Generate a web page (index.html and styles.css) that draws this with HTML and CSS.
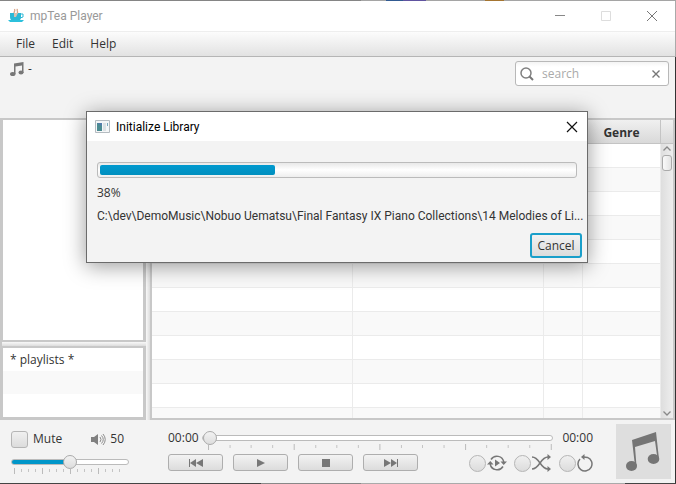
FILE: index.html
```html
<!DOCTYPE html>
<html lang="en">
<head>
<meta charset="utf-8">
<title>mpTea Player</title>
<link rel="stylesheet" href="styles.css">
</head>
<body>
<div class="window">
  <header class="titlebar">
    <svg class="app-icon" width="16" height="16" viewBox="0 0 16 16" aria-hidden="true">
      <path d="M6.500 6C4.500 4.500 8 3.500 6.500 1M9 5.500c2-2-1-2.500.5-4.500" fill="none" stroke="#d9a487" stroke-width="1.300"/>
      <path d="M2 5h11v4q0 4-4 4H6q-4 0-4-4z" fill="#2cb8d6"/>
      <path d="M6 5h4l-2 4H6z" fill="#d8c0b0"/>
      <path d="M12.500 6H15v3l-3 1" fill="none" stroke="#2cb8d6" stroke-width="1"/>
      <path d="M0 12h16l-2 2H2z" fill="#2cc0dc"/>
    </svg>
    <h1>mpTea Player</h1>
    <div class="window-buttons">
      <button type="button" aria-label="Minimize"><svg width="12" height="12"><path d="M1 5.500h10" stroke="#888"/></svg></button>
      <button type="button" aria-label="Maximize" disabled><svg width="12" height="12"><path d="M1.500 1.500h9v9h-9z" fill="none" stroke="#ddd"/></svg></button>
      <button type="button" aria-label="Close"><svg width="12" height="12"><path d="M1 1l10 10M11 1L1 11" stroke="#777"/></svg></button>
    </div>
  </header>

  <nav class="menubar">
    <button type="button">File</button>
    <button type="button">Edit</button>
    <button type="button">Help</button>
  </nav>

  <section class="toolbar">
    <div class="now-playing">
      <svg width="14" height="14" viewBox="0 0 28 28" aria-hidden="true"><use href="#note"/></svg>
      <span>-</span>
    </div>
    <div class="search">
      <svg width="14" height="14" viewBox="0 0 14 14" aria-hidden="true"><circle cx="6" cy="6" r="5" fill="none" stroke="#808080" stroke-width="1.500"/><path d="M9.500 9.500l3.500 3.500" stroke="#777" stroke-width="2"/></svg>
      <input type="text" placeholder="search" aria-label="search">
      <button type="button" aria-label="Clear"><svg width="8" height="8"><path d="M.5.5l7 7M7.500.5l-7 7" stroke="#777" stroke-width="1.400"/></svg></button>
    </div>
  </section>

  <main class="content">
    <aside class="sidebar">
      <div class="library"></div>
      <div class="split-h"></div>
      <ul class="playlists">
        <li>* playlists *</li>
        <li></li>
        <li></li>
      </ul>
    </aside>
    <div class="split-v"></div>
    <section class="tracks">
      <div class="table-clip">
        <table>
          <colgroup><col><col class="col-artist"><col class="col-number"><col class="col-genre"></colgroup>
          <thead><tr><th></th><th></th><th></th><th>Genre</th></tr></thead>
          <tbody>
            <tr><td></td><td></td><td></td><td></td></tr>
            <tr><td></td><td></td><td></td><td></td></tr>
            <tr><td></td><td></td><td></td><td></td></tr>
            <tr><td></td><td></td><td></td><td></td></tr>
            <tr><td></td><td></td><td></td><td></td></tr>
            <tr><td></td><td></td><td></td><td></td></tr>
            <tr><td></td><td></td><td></td><td></td></tr>
            <tr><td></td><td></td><td></td><td></td></tr>
            <tr><td></td><td></td><td></td><td></td></tr>
            <tr><td></td><td></td><td></td><td></td></tr>
            <tr><td></td><td></td><td></td><td></td></tr>
            <tr><td></td><td></td><td></td><td></td></tr>
          </tbody>
        </table>
      </div>
      <div class="scroll-column">
        <div class="corner"></div>
        <div class="scrollbar">
          <svg width="8" height="5"><path d="M.5 4.500L4 1l3.500 3.500" fill="none" stroke="#888" stroke-width="1.300"/></svg>
          <div class="scroll-thumb"></div>
          <svg width="8" height="5"><path d="M.5.5L4 4 7.500.5" fill="none" stroke="#888" stroke-width="1.300"/></svg>
        </div>
      </div>
    </section>
  </main>

  <footer class="player">
    <div class="volume">
      <div class="volume-row">
        <label class="mute"><input type="checkbox">Mute</label>
        <svg width="15" height="13" viewBox="0 0 15 13" aria-hidden="true"><path d="M0 4h3l4-3v11L3 9H0z" fill="#808080"/><path d="M9 4q2 2.500 0 5M10.500 2.500q3.500 4 0 8M12 1q4.500 5.500 0 11" fill="none" stroke="#8c8c8c"/></svg>
        <span>50</span>
      </div>
      <input class="slider half" type="range" min="0" max="100" value="50" aria-label="Volume">
      <svg class="volume-ticks" width="118" height="7" aria-hidden="true">
        <path d="M3.500 0v6M31.500 0v6M59.500 0v6M87.500 0v6" stroke="#bbb"/>
        <path d="M10.500 1v3M17.500 1v3M24.500 1v3M38.500 1v3M45.500 1v3M52.500 1v3M66.500 1v3M73.500 1v3M80.500 1v3M94.500 1v3M101.500 1v3M108.500 1v3" stroke="#c4c4c4"/>
      </svg>
    </div>

    <div class="transport">
      <div class="seek">
        <span>00:00</span>
        <div class="seek-slider">
          <input class="slider" type="range" min="0" max="100" value="0" aria-label="Position">
          <svg class="seek-ticks" width="100%" height="6" viewBox="0 0 351 6" preserveAspectRatio="none" aria-hidden="true">
            <path d="M6.500 0v6M92 0v6M177.500 0v6M263 0v6M348.500 0v6" stroke="#bbb"/>
            <path d="M28 1v3M49 1v3M70.500 1v3M113.500 1v3M134.500 1v3M156 1v3M199 1v3M220 1v3M241.500 1v3M284 1v3M305.500 1v3M327 1v3" stroke="#c4c4c4"/>
          </svg>
        </div>
        <span>00:00</span>
      </div>
      <div class="controls">
        <button type="button" aria-label="Previous"><svg width="14" height="8"><path d="M0 0h1v4l6-4v4l7-4v8L7 4v4L1 4v4H0z" fill="#777"/></svg></button>
        <button type="button" aria-label="Play"><svg width="8" height="8"><path d="M0 0l8 4-8 4z" fill="#777"/></svg></button>
        <button type="button" aria-label="Stop"><svg width="8" height="8"><path d="M0 0h8v8H0z" fill="#777"/></svg></button>
        <button type="button" aria-label="Next"><svg width="14" height="8"><path d="M14 0h-1v4L7 0v4L0 0v8l7-4v4l6-4v4h1z" fill="#777"/></svg></button>
        <div class="modes">
          <label><input type="radio" name="auto" aria-label="Autoplay">
            <svg width="20" height="18" viewBox="0 0 20 18"><path d="M4 5.500A7 7 0 0 1 16.800 8M16 12.500A7 7 0 0 1 3.200 10" fill="none" stroke="#777" stroke-width="1.500"/><path d="M13.500 7.500h6.500l-3.300 3.500zM0 10.500h6.500L3.300 7zM8 5.500l5 3.500-5 3.500z" fill="#777"/></svg></label>
          <label><input type="radio" name="shuffle" aria-label="Shuffle">
            <svg width="20" height="18" viewBox="0 0 20 18"><path d="M0 3c8 0 8 12 16 12M0 15c8 0 8-12 16-12" fill="none" stroke="#777" stroke-width="1.500"/><path d="M15.500 0l3.500 3-3.500 3zM15.500 12l3.500 3-3.500 3z" fill="#777"/></svg></label>
          <label><input type="radio" name="repeat" aria-label="Repeat">
            <svg width="16" height="18" viewBox="0 0 16 18"><path d="M3 5A7 7 0 1 0 10.500 3.400L6.500 3" fill="none" stroke="#777" stroke-width="1.500"/><path d="M7.500 0v6L4 3z" fill="#777"/></svg></label>
        </div>
      </div>
    </div>

    <div class="cover">
      <svg width="36" height="40" viewBox="0 0 36 40" aria-hidden="true">
        <path d="M6 8L30 0l3 27h-1.500L29 9 9 15l1.500 19H9z" fill="#757575"/>
        <ellipse cx="5.500" cy="34" rx="5.500" ry="5" fill="#757575"/>
        <ellipse cx="27.500" cy="27" rx="5.800" ry="5" fill="#757575"/>
      </svg>
    </div>
  </footer>

  <section class="dialog" role="dialog" aria-labelledby="dialog-title">
    <header class="dialog-title">
      <svg width="15" height="13" viewBox="0 0 15 13" aria-hidden="true"><path d="M.5.5h14v12H.5z" fill="#f4f6f7" stroke="#b4bbc0"/><path d="M2 3h5v8H2z" fill="#4b8b91"/><path d="M2 3h5v3z" fill="#547cab"/><path d="M8 3h3v8H8z" fill="#dce1e4"/><path d="M12 3h1v3h-1z" fill="#79a9bc"/></svg>
      <h2 id="dialog-title">Initialize Library</h2>
      <button type="button" aria-label="Close"><svg width="12" height="12"><path d="M1 1l10 10M11 1L1 11" stroke="#111" stroke-width="1.200"/></svg></button>
    </header>
    <div class="dialog-body">
      <div class="progress" role="progressbar" aria-valuenow="38" aria-label="Scan progress"><div class="progress-fill"></div></div>
      <p>38%</p>
      <p class="path">C:\dev\DemoMusic\Nobuo Uematsu\Final Fantasy IX Piano Collections\14 Melodies of Li...</p>
      <button class="cancel" type="button">Cancel</button>
    </div>
  </section>
</div>

<svg width="0" height="0" class="symbols" aria-hidden="true">
  <symbol id="note" viewBox="0 0 28 28"><path d="M8 3L27 0v22h-3V7L11 9v15H8z" fill="#777"/><ellipse cx="5.500" cy="24" rx="5.500" ry="4" fill="#777"/><ellipse cx="22" cy="21" rx="5" ry="4" fill="#777"/></symbol>
</svg>
</body>
</html>
```
FILE: styles.css
```css
* { box-sizing: border-box; }

body {
  margin: 0;
  font: 12px/16px "Open Sans", "Noto Sans", sans-serif;
  color: #333;
}

h1, h2, p, ul { margin: 0; padding: 0; font-size: 12px; font-weight: 400; list-style: none; }
h1, h2, .path { font-family: Roboto, sans-serif; }
button, input { font: inherit; color: inherit; margin: 0; }
button { padding: 0; border: 0; background: none; }
svg { display: block; flex: none; }
.symbols { position: absolute; }

.window {
  position: relative;
  display: flex;
  flex-direction: column;
  height: 100vh;
  padding: 1px 1px 1px 0;
  background:
    linear-gradient(90deg, #858585 361px, #a5a5a5 361px 386px, #315a91 386px 403px, #6054a0 403px 426px, #a5a5a5 426px 485px, #a57531 485px 504px, #a5a5a5 504px) top / 100% 1px no-repeat,
    linear-gradient(90deg, #444 261px, #888 261px 361px, #aaa 361px 625px, #444 625px) bottom / 100% 1px no-repeat,
    linear-gradient(#aaa 57px, #333 57px) right / 1px 100% no-repeat,
    #f3f3f3;
}

.titlebar {
  display: flex;
  align-items: center;
  height: 31px;
  padding-left: 8px;
  background: #fff;
  border-bottom: 1px solid #eee;
  color: #999;
}
.titlebar h1 { margin-left: 6px; }
.window-buttons { display: flex; margin-left: auto; }
.window-buttons button { display: grid; place-items: center; width: 46px; height: 28px; }

.menubar {
  display: flex;
  gap: 17px;
  height: 25px;
  padding-left: 16px;
  background: linear-gradient(#fcfcfc, #e2e2e2);
  border-bottom: 1px solid #b5b5b5;
}

.toolbar {
  display: flex;
  justify-content: space-between;
  align-items: flex-start;
  height: 61px;
  padding: 4px 6px 0 10px;
}
.now-playing { display: flex; align-items: center; gap: 4px; }
.search {
  display: flex;
  align-items: center;
  gap: 8px;
  width: 154px;
  height: 25px;
  padding: 0 8px 0 4px;
  border: 1px solid #b8b8b8;
  border-radius: 3px;
  background: linear-gradient(#f4f4f4, #fff 5px);
}
.search input { flex: 1; min-width: 0; padding: 0; border: 0; background: none; outline: 0; }
.search input::placeholder { color: #aaa; }

.content { display: flex; flex: 1; min-height: 0; }
.sidebar { display: flex; flex-direction: column; width: 146px; border-left: 2px solid #c8c8c8; }
.library { flex: 1; border: solid #c8c8c8; border-width: 2px 3px 2px 1px; background: #fff; }
.split-h { height: 4px; background: linear-gradient(#f8f8f8, #ddd); }
.playlists { border: solid #c8c8c8; border-width: 2px 3px 3px 1px; background: #fff; }
.playlists li { height: 23px; padding: 4px 7px 0; }
.playlists li:nth-child(even) { background: #f9f9f9; }
.split-v { width: 4px; background: linear-gradient(90deg, #f8f8f8, #ddd); }

.tracks { display: flex; flex: 1; min-width: 0; border: 2px solid #c8c8c8; }
.table-clip { flex: 1; overflow: hidden; background: #fff; }
table { width: 100%; table-layout: fixed; border-collapse: separate; border-spacing: 0; }
.col-artist { width: 191px; }
.col-number { width: 39px; }
.col-genre { width: 78px; }
th, td { height: 24px; padding: 0; border: solid #ebebeb; border-width: 0 1px 1px 0; }
th { padding-top: 2px; border-color: #c4c4c4; background: linear-gradient(#f0f0f0, #d9d9d9); }
tbody tr:nth-child(even) { background: #f9f9f9; }

.scroll-column { display: flex; flex-direction: column; width: 12px; }
.corner { height: 24px; border-bottom: 1px solid #c4c4c4; background: linear-gradient(#f0f0f0, #d9d9d9); }
.scrollbar {
  display: flex;
  flex: 1;
  flex-direction: column;
  align-items: center;
  gap: 4px;
  padding: 2px 0;
  background: linear-gradient(90deg, #dedede, #eee);
}
.scroll-thumb {
  width: 10px;
  height: 16px;
  margin-bottom: auto;
  border: 1px solid #aaa;
  border-radius: 3px;
  background: linear-gradient(90deg, #fafafa, #e3e3e3);
}

.player { display: flex; height: 63px; padding: 4px 4px 0 11px; }
.volume { width: 118px; padding-top: 6px; }
.volume-row, .mute { display: flex; align-items: center; }
.volume-row { height: 18px; gap: 4px; }
.mute { gap: 5px; margin-right: auto; }
.volume-row span { margin-right: 5px; }
.mute input, .modes input {
  appearance: none;
  width: 17px;
  height: 17px;
  border: 1px solid #b5b5b5;
  border-radius: 3px;
  background: linear-gradient(#f0f0f0, #dcdcdc);
}
.modes input { border-radius: 50%; }

.slider { display: block; appearance: none; width: 100%; height: 16px; margin: 0; background: none; }
.slider::-webkit-slider-runnable-track {
  height: 6px;
  border: 1px solid #bbb;
  border-radius: 3px;
  background: #fff;
}
.half::-webkit-slider-runnable-track { background: linear-gradient(90deg, #0096c9 50%, #fff 50%); }
.slider::-webkit-slider-thumb {
  appearance: none;
  width: 14px;
  height: 14px;
  margin-top: -5px;
  border: 1px solid #aaa;
  border-radius: 50%;
  background: linear-gradient(#f2f2f2, #ddd);
}
.volume .slider { margin-top: 6px; }
.volume-ticks { margin-top: -2px; }
.seek-ticks { margin-top: -2px; }

.transport { flex: 1; min-width: 0; margin-left: 39px; padding-top: 6px; }
.seek { display: flex; gap: 3px; height: 24px; }
.seek-slider { flex: 1; min-width: 0; }
.seek span:last-child { margin-left: 6px; }
.controls { display: flex; gap: 10px; }
.controls button {
  display: grid;
  place-items: center;
  width: 55px;
  height: 17px;
  border: 1px solid #aeaeae;
  border-radius: 3px;
  background: linear-gradient(#f3f3f3, #dcdcdc);
}
.modes { display: flex; gap: 7px; margin-left: auto; }
.modes label { display: flex; align-items: center; gap: 1px; }

.cover { display: grid; place-items: center; width: 55px; height: 55px; margin-left: 23px; background: #dedede; }

.dialog {
  position: absolute;
  top: 111px;
  left: calc(50% - 252px);
  width: 502px;
  border: 1px solid #6b6b6b;
  background: #f3f3f3;
  box-shadow: 0 3px 20px rgba(0, 0, 0, .4);
}
.dialog-title { display: flex; align-items: center; gap: 6px; height: 29px; padding: 0 9px 0 8px; background: #fff; color: #000; }
.dialog-title button { margin-left: auto; }
.dialog-body { display: flex; flex-direction: column; gap: 7px; padding: 21px 5px 4px 10px; }
.dialog-body p { white-space: nowrap; }
.progress {
  height: 16px;
  margin: 0 5px 0 0;
  padding: 2px;
  border: 1px solid #bbb;
  border-radius: 3px;
  background: linear-gradient(#e8e8e8, #fff 50%, #eee);
}
.progress-fill { width: 37%; height: 10px; border-radius: 2px; background: linear-gradient(#0099cf, #008fbe); }
.cancel {
  align-self: flex-end;
  width: 52px;
  height: 25px;
  margin-top: 2px;
  border: 2px solid #1a9fca;
  border-radius: 3px;
  background: linear-gradient(#f2f2f2, #dcdcdc);
}
```
